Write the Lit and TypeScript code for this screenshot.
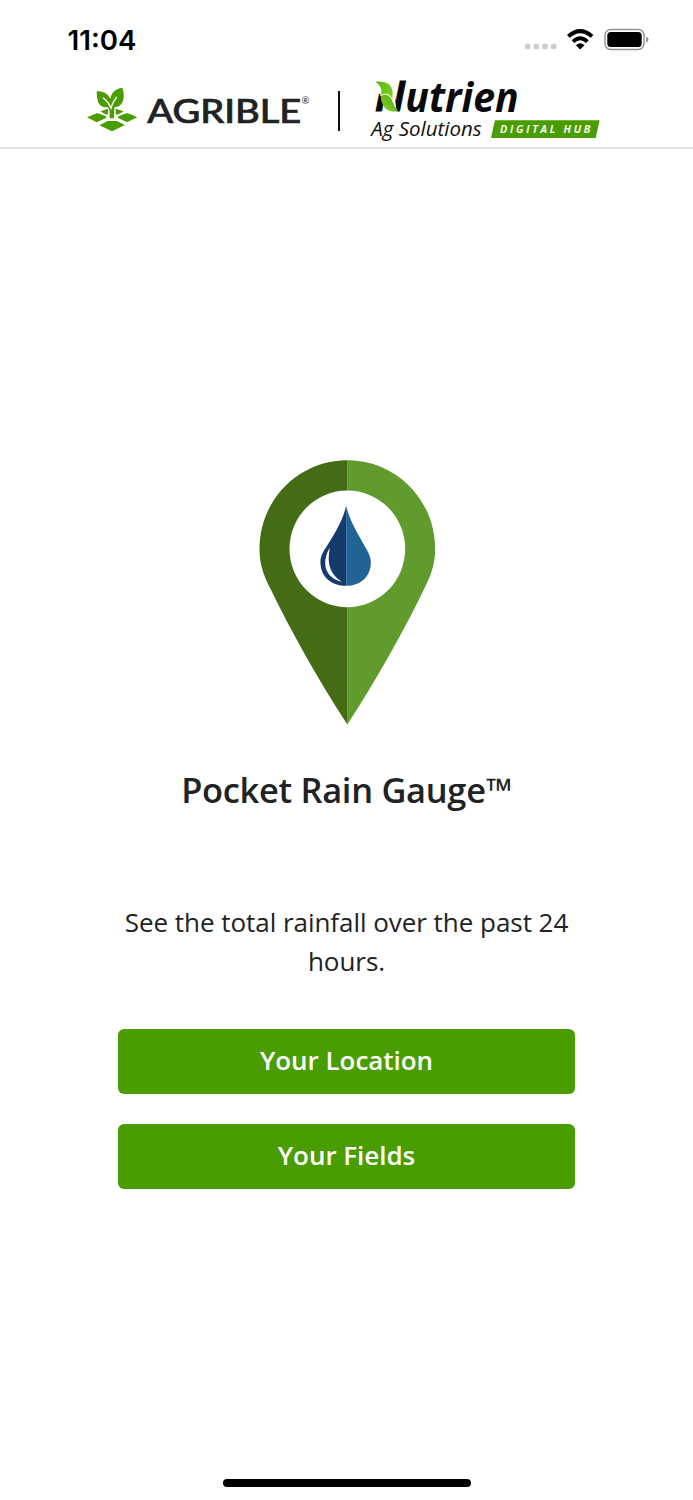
import { LitElement, html, css } from "lit";
import { customElement } from "lit/decorators.js";

@customElement("status-bar")
class StatusBar extends LitElement {
  static styles = css`
    :host { display: flex; justify-content: space-between; align-items: center; height: 79px; padding: 0 43px 2px 64px; box-sizing: border-box; }
    .art { display: block; }
  `;
  render() {
    return html`
      <svg class="art" width="80" height="44" viewBox="-3 -7 80 44" role="img" aria-label="11:04">
        <text x="0.600" y="25.8" font-family="Inter, sans-serif" font-size="27.5" font-weight="600" textLength="68.8" lengthAdjust="spacingAndGlyphs">11:04</text>
      </svg>
      <svg class="art" width="126" height="30" viewBox="524 24 126 30">
        <g fill="#cdcdcd">
          <rect x="525" y="43.7" width="5.4" height="5.6" rx="1.6" />
          <rect x="533.7" y="43.7" width="5.4" height="5.6" rx="1.6" />
          <rect x="542.3" y="43.7" width="5.4" height="5.6" rx="1.6" />
          <rect x="551" y="43.7" width="5.4" height="5.6" rx="1.6" />
        </g>
        <g fill="none" stroke="#000" stroke-width="3.9">
          <path d="M568.3 36.400 Q580.2 25.8 592.1 36.400" />
          <path d="M573 41.6 Q580.2 35 587.4 41.6" />
        </g>
        <path d="M575.9 45.3Q580.2 41.2 584.5 45.3L580.2 49.6Z" />
        <rect x="605" y="29.6" width="39" height="19.8" rx="5.6" fill="none" stroke="#949494" stroke-width="1.5" />
        <rect x="607.3" y="31.9" width="34.4" height="15.2" rx="3.6" />
        <path d="M646 36.6q2.6 .8 2.6 2.9t-2.6 2.9z" fill="#949494" />
      </svg>
    `;
  }
}

@customElement("brand-header")
class BrandHeader extends LitElement {
  static styles = css`
    :host { display: flex; align-items: flex-start; height: 70px; padding-left: 75px; box-sizing: border-box; border-bottom: 2px solid #e2e2e2; }
    .art { display: block; flex: none; overflow: visible; }
    .rule { width: 2px; height: 40px; margin: 12px 20px 0 2px; background: #111; flex: none; }
  `;
  render() {
    return html`
      <svg class="art" width="261" height="64" viewBox="0 12 783 192">
        <g fill="#4a9d00">
          <path d="M142 38C148 58 149 78 136 90Q129 97 119 96Q117 102 117 130H104C104 108 104 103 98 97C83 98 73 91 69 80Q65 67 65 49C86 49 99 56 106 72C109 53 120 42 142 38Z" />
          <path d="M36 127 67 114 93 124Q97 127 92 130L65 142Z" />
          <path d="M130 124 157 114 187 127 156 142 131 130Q127 127 130 124Z" />
          <path d="M73 151 98 138H126L150 150 111 169Z" />
          <path d="M76 109 99 101V118L94 119Z" />
          <path d="M122 101 146 109 128 119 122 118Z" />
        </g>
        <path d="M84 68C93 76 102 83 108 99C112 85 116 77 125 66" fill="none" stroke="#fff" stroke-width="4" />
        <text x="217" y="143" font-family="Lato, sans-serif" font-size="101" font-weight="500" fill="#202223" stroke="#202223" stroke-width="2.2" textLength="462" lengthAdjust="spacingAndGlyphs">AGRIBLE</text>
        <text x="680" y="88" font-family="Lato, sans-serif" font-size="27" fill="#202223">®</text>
      </svg>
      <div class="rule"></div>
      <svg class="art" width="250" height="68" viewBox="0 12 750 204">
        <defs>
          <linearGradient id="leaf" x1="0" y1="0" x2="1" y2="1">
            <stop offset="0" stop-color="#59b30b" />
            <stop offset="1" stop-color="#86d62a" />
          </linearGradient>
          <linearGradient id="leafLow" x1="1" y1="0" x2="0" y2="1">
            <stop offset="0" stop-color="#4fa50a" />
            <stop offset="1" stop-color="#86d62a" />
          </linearGradient>
        </defs>
        <text x="45" y="109" font-family="Open Sans, sans-serif" font-size="122" font-weight="700" font-style="italic" fill="#090909" stroke="#090909" stroke-width="3" textLength="91" lengthAdjust="spacingAndGlyphs">N</text>
        <path d="M40 12H108L104 62L110 112H86L66 62L40 42Z" fill="#fff" />
        <text x="136" y="110" font-family="Open Sans, sans-serif" font-size="123" font-weight="700" font-style="italic" fill="#090909" textLength="340" lengthAdjust="spacingAndGlyphs">utrien</text>
        <path d="M46 20C78 18 97 28 98 53C98 64 97 69 99 76C90 57 76 55 62 62C68 45 63 32 46 20Z" fill="url(#leaf)" />
        <path d="M62 61C80 54 92 63 97 78Q103 97 115 109C95 111 77 106 70 92Q62 79 62 61Z" fill="url(#leafLow)" />
        <path d="M61 62C80 52 92 61 99 78" fill="none" stroke="#fff" stroke-width="3" />
        <text x="34" y="182" font-family="Open Sans, sans-serif" font-size="62" font-style="italic" fill="#111" textLength="331" lengthAdjust="spacingAndGlyphs">Ag Solutions</text>
        <path d="M405 136H719L707 189H393Z" fill="#4a9d00" />
        <text x="420" y="174" font-family="Open Sans, sans-serif" font-size="32" font-weight="600" font-style="italic" fill="#fff" stroke="#fff" stroke-width=".6" textLength="271">DIGITAL HUB</text>
      </svg>
    `;
  }
}

@customElement("rain-pin")
class RainPin extends LitElement {
  static styles = css`
    :host, .art { display: block; }
  `;
  render() {
    return html`
      <svg class="art" width="176" height="266" viewBox="26.5 29.5 528 798">
        <path d="M292 30C145 30 28 148 28 297C28 345 42 378 62 418C125 548 205 690 292 824Z" fill="#436c14" />
        <path d="M291 30C438 30 555 148 555 297C555 345 541 378 521 418C458 548 378 690 291 824Z" fill="#619b2d" />
        <ellipse cx="291.500" cy="296" rx="173.500" ry="175" fill="#fff" />
        <path d="M288 167C275 221 247 260 223 299C213 315 210 325 211 340C213 382 246 407 288 407Z" fill="#153a6c" />
        <path d="M288 167C300 218 328 258 350 299C359 315 362 325 362 340C360 382 329 407 288 407Z" fill="#226396" />
        <path d="M239 293C216 330 218 382 275 395C241 373 229 344 239 293Z" fill="#fff" />
      </svg>
    `;
  }
}

@customElement("app-root")
class AppRoot extends LitElement {
  static styles = css`
    :host { display: flex; flex-direction: column; width: 693px; height: 1500px; background: #fff; color: #202223; font-family: "Open Sans", sans-serif; overflow: hidden; }
    .main { flex: 1; display: flex; flex-direction: column; align-items: center; padding: 311px 118px 0; }
    .title { margin: 40px 0 0; font-size: 34.4px; line-height: 48px; font-weight: 600; letter-spacing: -0.27px; white-space: nowrap; }
    .copy { margin: 89px 0 0; width: 457px; font-size: 26px; line-height: 39px; letter-spacing: -0.04px; text-align: center; }
    .actions { margin-top: 48px; width: 457px; display: flex; flex-direction: column; gap: 30px; }
    .button { height: 65px; padding: 0 0 4px; border: 0; border-radius: 6px; background: #4a9d00; color: #fff; font: 600 26px "Open Sans", sans-serif; letter-spacing: -0.04px; }
    .home { align-self: center; width: 248px; height: 8px; border-radius: 4px; background: #000; margin-bottom: 13px; }
  `;
  render() {
    return html`
      <status-bar></status-bar>
      <brand-header></brand-header>
      <main class="main">
        <rain-pin></rain-pin>
        <h1 class="title">Pocket Rain Gauge™</h1>
        <p class="copy">See the total rainfall over the past 24 hours.</p>
        <div class="actions">
          <button class="button">Your Location</button>
          <button class="button">Your Fields</button>
        </div>
      </main>
      <div class="home"></div>
    `;
  }
}
